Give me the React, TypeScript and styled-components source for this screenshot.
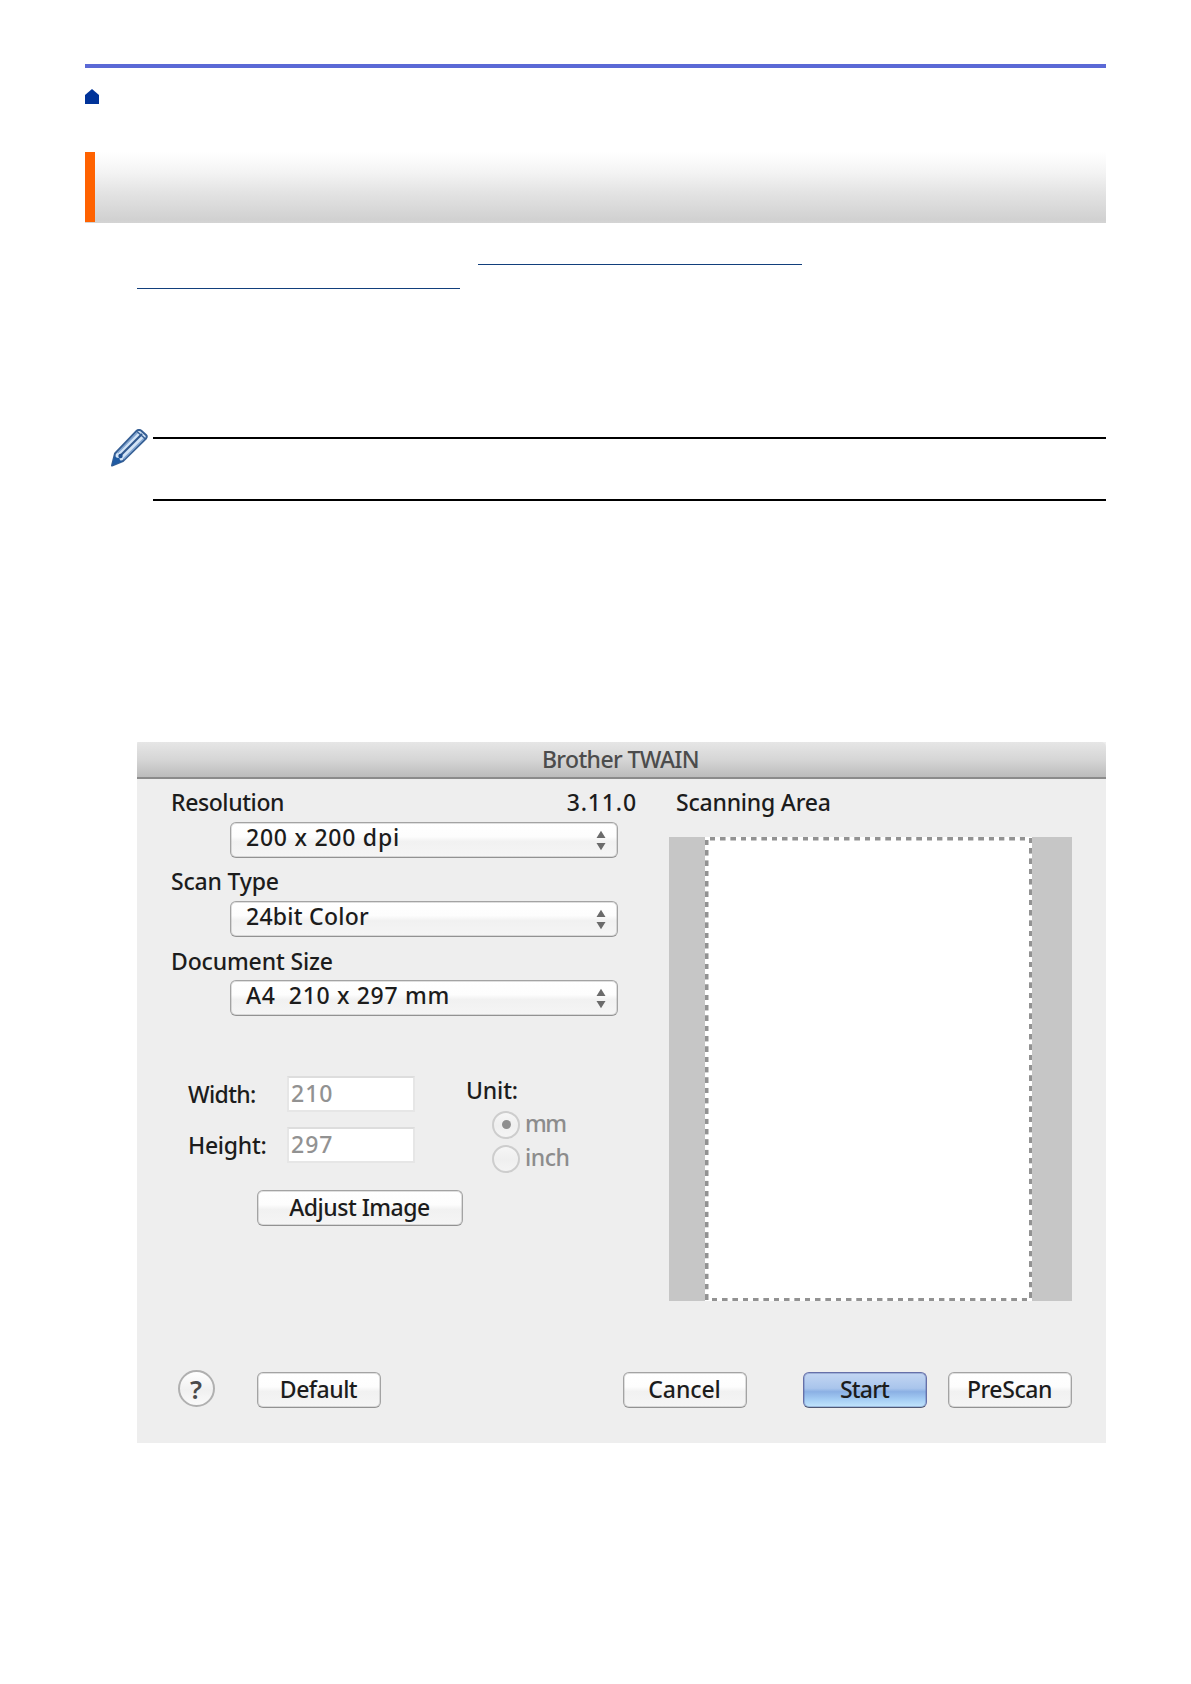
import styled, { createGlobalStyle, css } from 'styled-components'

const GlobalStyle = createGlobalStyle`
    body {
        margin: 0;
        background-color: #fff;
    }
    * {
        box-sizing: border-box;
    }
`

const Page = styled.main`
    display: flex;
    flex-direction: column;
    width: 1191px;
    height: 1684px;
    padding: 64px 85px 0;
    font-family: 'Noto Sans', 'Open Sans', sans-serif;
`

const TopRule = styled.div`
    height: 4px;
    background-color: #5b69d6;
`

const HomeLink = styled.a`
    display: flex;
    margin-top: 21px;
`

const Heading = styled.header`
    display: flex;
    height: 71px;
    margin-top: 48px;
    background: linear-gradient(#ffffff 0%, #f4f4f4 28%, #e3e3e3 58%, #d1d1d1 95%, #d4d4d4 100%);

    &::before {
        content: '';
        width: 10px;
        height: 70px;
        background-color: #ff6200;
    }
`

const Links = styled.div`
    display: flex;
    flex-direction: column;
    gap: 23px;
    margin-top: 41px;
    padding-left: 52px;
`

const LinkLine = styled.a<{ $indent?: number; $width: number }>`
    width: ${props => props.$width}px;
    height: 1px;
    margin-left: ${props => props.$indent || 0}px;
    background-color: #123f7c;
`

const Note = styled.section`
    display: flex;
    gap: 4px;
    margin-top: 140px;
    padding-left: 26px;

    div {
        flex: 1;
        height: 64px;
        margin-top: 8px;
        border-top: 2px solid #000;
        border-bottom: 2px solid #000;
    }
`

const Dialog = styled.section`
    width: 969px;
    height: 701px;
    margin: 241px 0 0 52px;
    background-color: #eeeeee;
`

const TitleBar = styled.div`
    display: flex;
    justify-content: center;
    height: 37px;
    padding: 3px 2px 0 0;
    border-bottom: 2px solid #8b8b8b;
    border-radius: 2px 5px 0 0;
    background: linear-gradient(#e6e6e6, #d6d6d6 50%, #bcbcbc);
`

const Text = styled.span<{ $track?: number; $tone?: string }>`
    color: ${props => props.$tone || '#1c1c1c'};
    font-size: 23px;
    font-weight: 500;
    line-height: 28px;
    letter-spacing: ${props => props.$track || 0}px;
    white-space: pre;
`

const Body = styled.div`
    display: grid;
    grid-template-columns: 532px 403px;
    grid-template-rows: 582px 37px;
    padding-top: 9px;
`

const Settings = styled.div`
    padding: 0 32px 0 34px;
`

const Field = styled.div`
    height: 79.25px;
`

const FieldHead = styled.div`
    display: flex;
    justify-content: space-between;
    margin-bottom: 5.5px;
`

const raised = css`
    border: 1px solid #a3a3a3;
    border-bottom-color: #929292;
    border-radius: 6px;
    background: linear-gradient(#ffffff 0%, #fdfdfd 40%, #f1f1f1 55%, #f5f5f5 100%);
    box-shadow: inset 0 0 0 1px rgba(150, 150, 150, 0.3);
`

const Select = styled.div`
    ${raised}
    display: flex;
    justify-content: space-between;
    width: 388px;
    height: 36px;
    margin-left: 59px;
    padding: 0 11px 0 15px;

    svg {
        margin-top: 7px;
    }
`

const SizeGroup = styled.div`
    display: flex;
    margin-top: 50px;
    padding-left: 17px;
`

const SizeGrid = styled.div`
    display: grid;
    grid-template-columns: 99px 128px;
    grid-auto-rows: 36px;
    row-gap: 15.5px;
    align-items: center;
`

const NumberBox = styled.div`
    height: 36px;
    padding: 1px 0 0 2px;
    border: 2px solid #e6e6e6;
    border-top-color: #dddddd;
    background-color: #fff;

    span {
        display: block;
    }
`

const UnitGroup = styled.div`
    display: flex;
    flex-direction: column;
    height: 87px;
    margin-left: 51px;
`

const RadioRow = styled.div`
    display: flex;
    flex-shrink: 0;
    gap: 5px;
    height: 34.5px;
    padding-top: 5px;
`

const Radio = styled.i<{ $on?: boolean }>`
    display: flex;
    align-items: center;
    justify-content: center;
    width: 28px;
    height: 28px;
    margin: 2px 0 0 26px;
    border: 2px solid #cdcdcd;
    border-radius: 50%;
    background: linear-gradient(#f6f6f6, #efefef 50%, #f4f4f4);

    ${props => props.$on && css`
        &::after {
            content: '';
            width: 9px;
            height: 9px;
            border-radius: 50%;
            background-color: #8f8f8f;
        }
    `}
`

const Button = styled.button<{ $width: number; $gap?: number; $primary?: boolean }>`
    ${raised}
    display: flex;
    justify-content: center;
    width: ${props => props.$width}px;
    height: 36px;
    margin: 2px 0 0 ${props => props.$gap || 0}px;
    padding: 2px 1px 0 0;
    font-family: inherit;

    ${props => props.$primary && css`
        border-color: #6670a8;
        border-bottom-color: #4f5872;
        background: linear-gradient(#c3d6f2 0%, #a9c5ec 45%, #8bb0e4 55%, #a5cdf4 78%, #c2e6fc 100%);
        box-shadow: inset 0 0 0 1px rgba(90, 105, 170, 0.35);
    `}
`

const AdjustRow = styled.div`
    display: flex;
    margin-top: 25px;
    padding-left: 86px;
`

const ScanPane = styled.div`
    display: flex;
    flex-direction: column;
    gap: 21px;

    > span {
        padding-left: 7px;
    }
`

const Bed = styled.div`
    height: 464px;
    padding-left: 36px;
    background-color: #c6c6c6;
`

const dashes = (dir: string) =>
    `repeating-linear-gradient(${dir}, #929292 0 5px, #fff 5.4px 9.9px, #929292 10.33px)`

const Sheet = styled.div`
    width: 327px;
    height: 464px;
    background:
        ${dashes('to right')} 5px 0 / 316px 3.5px no-repeat,
        ${dashes('to right')} 7px 100% / 316px 3.5px no-repeat,
        ${dashes('to bottom')} 0 3px / 3.5px 461px no-repeat,
        ${dashes('to bottom')} 100% 1px / 3.5px 460px no-repeat,
        #fff;
`

const Footer = styled.div`
    display: flex;
    grid-column: 1 / -1;
    padding: 0 0 0 41px;
`

const HelpButton = styled.button`
    display: flex;
    justify-content: center;
    width: 37px;
    height: 37px;
    margin-right: 42px;
    padding: 3px 1px 0 0;
    border: 2px solid #b0b0b0;
    border-radius: 50%;
    background: linear-gradient(#ffffff, #f0f0f0 55%, #fafafa);
    font-family: inherit;

    span {
        font-size: 26px;
        font-weight: 600;
    }
`

function HomeIcon() {
    return (
        <svg width="14" height="15" viewBox="0 0 14 15">
            <path d="M7 0L14 6V15H0V6Z" fill="#003399" />
        </svg>
    )
}

function PencilIcon() {
    return (
        <svg width="38" height="38" viewBox="0 0 38 38">
            <path d="M4 24.500L26 1.500Q28 .3 30 1.500L35 6Q36.500 7.500 35 9.500L12 32L1 36.500Z" fill="#d3e4f6" stroke="#365f94" strokeWidth="2" strokeLinejoin="round" />
            <path d="M8.500 27.500L31 5" stroke="#31598f" strokeWidth="2.200" />
            <path d="M6.500 24L26.500 3.500M12.500 30L33.500 9" stroke="#7fa3cf" strokeWidth="1.500" />
            <path d="M26 2.500L34.500 10" stroke="#365f94" strokeWidth="1.500" />
            <path d="M4 26L1 36.500L12 32Q8.500 32.500 8.500 29Q4.500 29.500 4 26Z" fill="#1f5ba3" />
            <circle cx="9.500" cy="27" r="2.200" fill="#1f4f90" />
        </svg>
    )
}

function Stepper() {
    return (
        <svg width="10" height="21" viewBox="0 0 10 21">
            <path d="M5 .7L9.500 8H.5ZM5 20.300L9.500 13H.5Z" fill="#6b6b6b" />
        </svg>
    )
}

const fields = [
    { label: 'Resolution', track: -0.4, value: '200 x 200 dpi', valueTrack: 0.75, version: '3.11.0' },
    { label: 'Scan Type', track: -0.2, value: '24bit Color', valueTrack: 0.25 },
    { label: 'Document Size', track: -0.15, value: 'A4\u00a0\u00a0210 x 297 mm', valueTrack: 0.67 },
]

export default function App() {
    return (
        <Page>
            <GlobalStyle />
            <TopRule />
            <HomeLink><HomeIcon /></HomeLink>
            <Heading />
            <Links>
                <LinkLine $indent={341} $width={324} />
                <LinkLine $width={323} />
            </Links>
            <Note>
                <PencilIcon />
                <div />
            </Note>
            <Dialog>
                <TitleBar>
                    <Text $track={-0.62} $tone="#4c4c4c">Brother TWAIN</Text>
                </TitleBar>
                <Body>
                    <Settings>
                        {fields.map(field => (
                            <Field key={field.label}>
                                <FieldHead>
                                    <Text $track={field.track}>{field.label}</Text>
                                    {field.version && <Text $track={0.85}>{field.version}</Text>}
                                </FieldHead>
                                <Select>
                                    <Text $track={field.valueTrack}>{field.value}</Text>
                                    <Stepper />
                                </Select>
                            </Field>
                        ))}
                        <SizeGroup>
                            <SizeGrid>
                                <Text $track={-0.66}>Width:</Text>
                                <NumberBox><Text $track={1} $tone="#929292">210</Text></NumberBox>
                                <Text $track={-0.27}>Height:</Text>
                                <NumberBox><Text $track={1} $tone="#929292">297</Text></NumberBox>
                            </SizeGrid>
                            <UnitGroup>
                                <Text $track={-0.15}>Unit:</Text>
                                <RadioRow>
                                    <Radio $on />
                                    <Text $track={-1.5} $tone="#8c8c8c">mm</Text>
                                </RadioRow>
                                <RadioRow>
                                    <Radio />
                                    <Text $track={-0.5} $tone="#8c8c8c">inch</Text>
                                </RadioRow>
                            </UnitGroup>
                        </SizeGroup>
                        <AdjustRow>
                            <Button $width={206}><Text $track={-0.5}>Adjust Image</Text></Button>
                        </AdjustRow>
                    </Settings>
                    <ScanPane>
                        <Text $track={-0.22}>Scanning Area</Text>
                        <Bed>
                            <Sheet />
                        </Bed>
                    </ScanPane>
                    <Footer>
                        <HelpButton><Text $tone="#4a4a4a">?</Text></HelpButton>
                        <Button $width={124}><Text $track={-0.5}>Default</Text></Button>
                        <Button $width={124} $gap={242}><Text $track={-0.1}>Cancel</Text></Button>
                        <Button $width={124} $gap={56} $primary><Text $track={-0.8}>Start</Text></Button>
                        <Button $width={124} $gap={21}><Text $track={-0.4}>PreScan</Text></Button>
                    </Footer>
                </Body>
            </Dialog>
        </Page>
    )
}
